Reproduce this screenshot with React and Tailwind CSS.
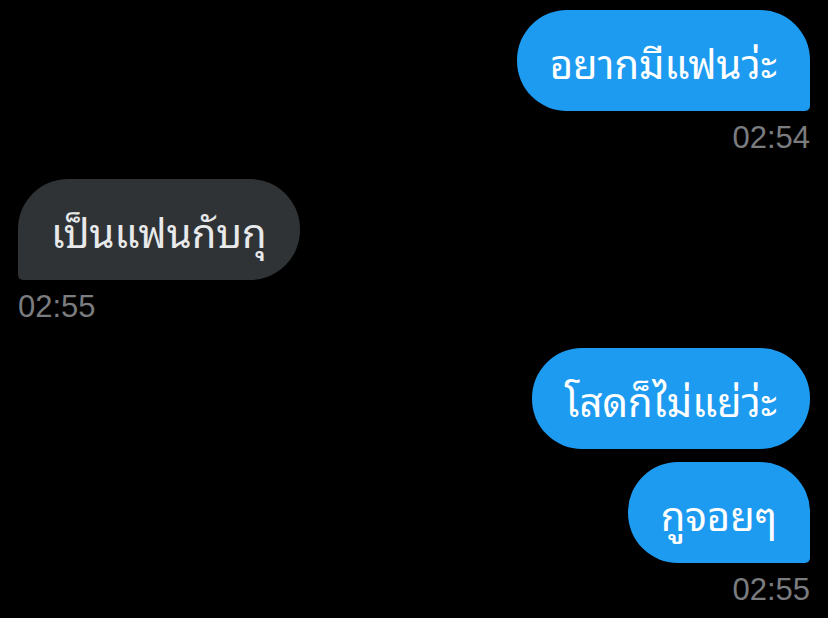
const messages = [
  { id: 1, text: 'อยากมีแฟนว่ะ', mine: true, time: '02:54', tail: true },
  { id: 2, text: 'เป็นแฟนกับกุ', mine: false, time: '02:55', tail: true },
  { id: 3, text: 'โสดก็ไม่แย่ว่ะ', mine: true, tail: false },
  { id: 4, text: 'กูจอยๆ', mine: true, time: '02:55', tail: true },
];

const Bubble = ({ msg }) => {
  const shape = msg.mine
    ? msg.tail
      ? 'rounded-[50px] rounded-br-[5px]'
      : 'rounded-[50px]'
    : 'rounded-[50px] rounded-bl-[5px]';
  const color = msg.mine ? 'bg-[#1d9bf0] text-white' : 'bg-[#2f3336] text-[#e7e9ea]';

  return (
    <div className={`h-[101px] flex items-center px-[33px] text-[40px] ${shape} ${color}`}>
      {msg.text}
    </div>
  );
};

const App = () => {
  return (
    <div
      className="w-[828px] h-[618px] bg-black overflow-hidden px-[18px] pt-[10px] flex flex-col"
      style={{ fontFamily: '"Noto Sans Thai Looped", "Loma", "Garuda", "Noto Serif Thai", "Noto Sans", sans-serif' }}
    >
      {messages.map((msg) => (
        <div key={msg.id} className={`flex flex-col ${msg.mine ? 'items-end' : 'items-start'} ${msg.time ? 'mb-[24px]' : 'mb-[13px]'}`}>
          <Bubble msg={msg} />
          {msg.time && (
            <div className="mt-[10px] text-[31px] leading-[34px] text-[#7a7c7f]" style={{ fontFamily: '"Liberation Sans", Arial, sans-serif' }}>
              {msg.time}
            </div>
          )}
        </div>
      ))}
    </div>
  );
};

export default App;
